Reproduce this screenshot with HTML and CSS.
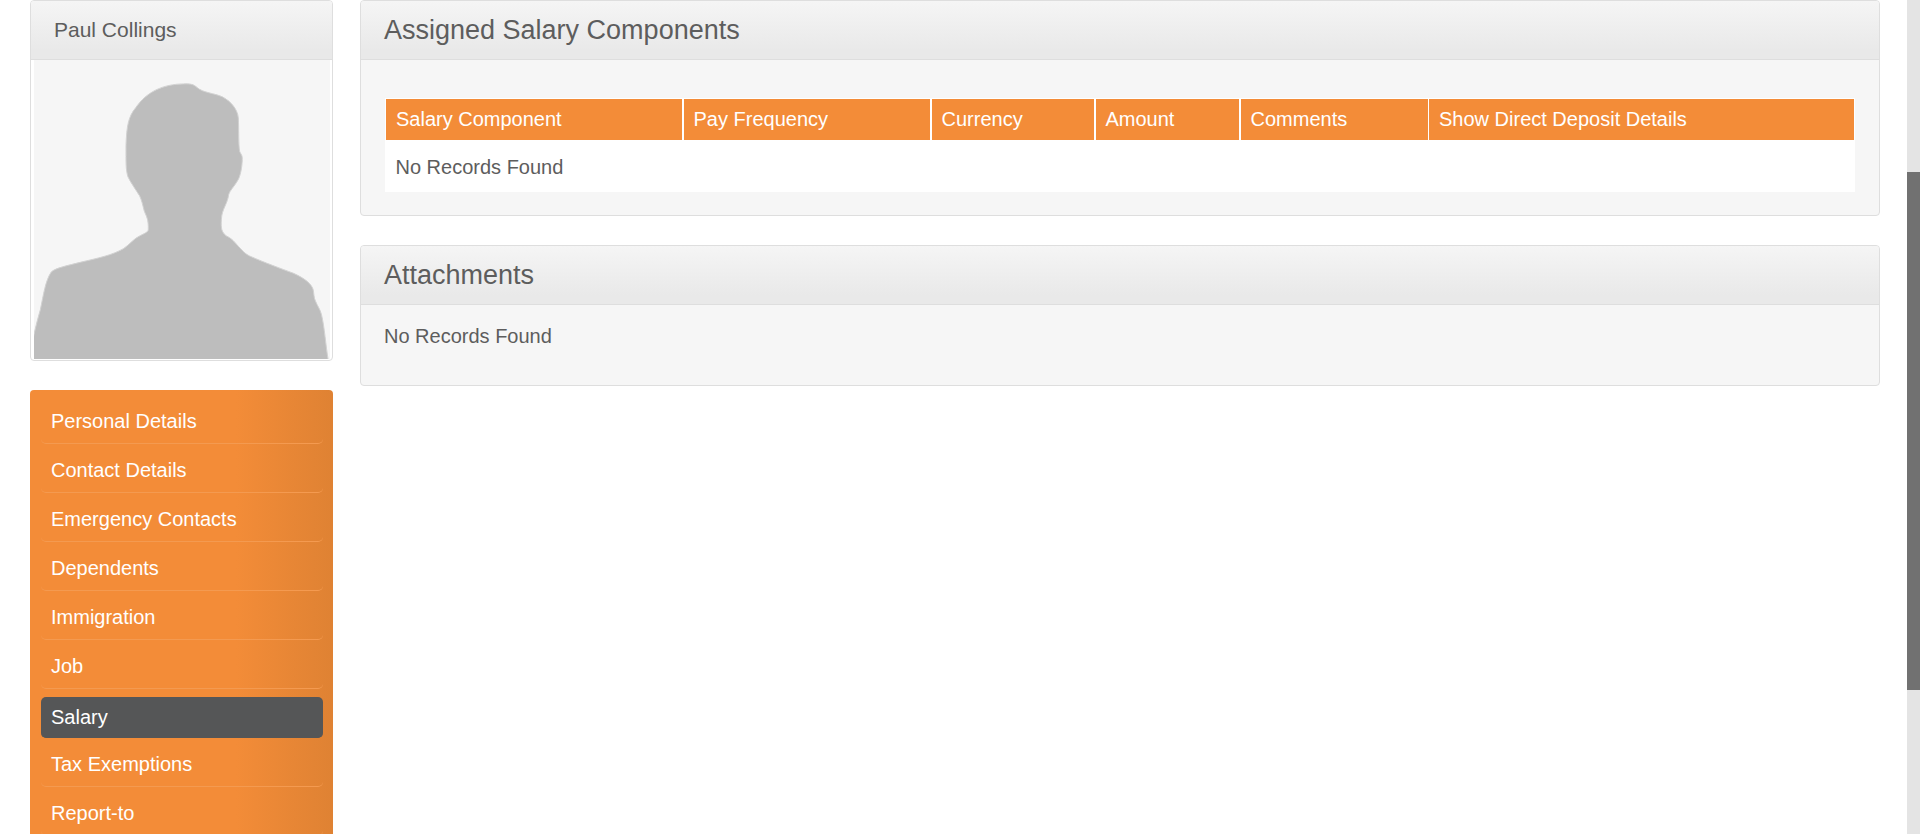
FILE: index.html
```
<!DOCTYPE html>
<html lang="en">
<head>
<meta charset="utf-8">
<title>Salary - Paul Collings</title>
<link rel="stylesheet" href="styles.css">
</head>
<body>
<div class="app">
  <div class="page">
    <aside class="sidebar">
      <section class="card profile">
        <h1 class="card-head profile-name">Paul Collings</h1>
        <div class="photo">
          <svg class="silhouette" viewBox="41 180 891 900" role="img" aria-label="Employee photo">
            <rect x="41" y="180" width="891" height="900" fill="#f6f6f6"/>
            <path fill="#bdbdbd" stroke="#d2d2d2" stroke-width="3" d="M35 1085V1035C45 985 52 960 60 932C70 885 75 845 93 818C105 806 145 798 180 789C235 776 275 768 310 748C330 735 340 718 362 708C378 700 385 697 385 690C386 660 380 652 373 635C368 615 365 602 359 589C350 575 330 545 324 532C317 510 318 490 318 435C320 380 325 350 347 324C380 275 430 253 490 252C515 251 522 254 532 263C550 279 585 280 608 291C635 305 654 330 656 354C658 390 656 430 660 455C665 467 668 465 668 480C667 505 662 530 654 543C643 562 631 572 627 585C624 612 606 630 605 660C603 690 607 698 619 709C637 718 642 725 650 734C672 758 675 762 690 770C735 790 785 808 822 822C858 838 876 855 881 870C884 882 883 895 888 905C894 920 902 930 906 945C916 985 919 1040 927 1085Z"/>
          </svg>
        </div>
      </section>
      <nav class="menu" aria-label="Employee sections">
        <ul class="menu-list">
          <li><a class="menu-link" href="#">Personal Details</a></li>
          <li><a class="menu-link" href="#">Contact Details</a></li>
          <li><a class="menu-link" href="#">Emergency Contacts</a></li>
          <li><a class="menu-link" href="#">Dependents</a></li>
          <li><a class="menu-link" href="#">Immigration</a></li>
          <li><a class="menu-link" href="#">Job</a></li>
          <li><a class="menu-link active" href="#" aria-current="page">Salary</a></li>
          <li><a class="menu-link" href="#">Tax Exemptions</a></li>
          <li><a class="menu-link" href="#">Report-to</a></li>
        </ul>
      </nav>
    </aside>
    <main class="content">
      <section class="card">
        <h2 class="card-head">Assigned Salary Components</h2>
        <div class="card-body components">
          <table class="grid">
            <colgroup>
              <col class="col-component"><col class="col-frequency"><col class="col-currency"><col class="col-amount"><col class="col-comments"><col>
            </colgroup>
            <thead>
              <tr><th>Salary Component</th><th>Pay Frequency</th><th>Currency</th><th>Amount</th><th>Comments</th><th>Show Direct Deposit Details</th></tr>
            </thead>
            <tbody>
              <tr><td colspan="6">No Records Found</td></tr>
            </tbody>
          </table>
        </div>
      </section>
      <section class="card">
        <h2 class="card-head">Attachments</h2>
        <div class="card-body attachments"><p class="note">No Records Found</p></div>
      </section>
    </main>
  </div>
  <div class="scrollbar"><div class="thumb"></div></div>
</div>
</body>
</html>
```
FILE: styles.css
```
* { box-sizing: border-box; }

body {
  margin: 0;
  background: #fff;
  color: #5d5d5d;
  font: 20px/24px "Liberation Sans", Arial, sans-serif;
}

.app {
  display: flex;
  height: 100vh;
  overflow: hidden;
}

.page {
  flex: 1;
  display: flex;
  gap: 27px;
  padding: 0 27px 0 30px;
}

.sidebar {
  flex: none;
  width: 303px;
  display: flex;
  flex-direction: column;
  gap: 29px;
}

.content {
  flex: 1;
  min-width: 0;
  display: flex;
  flex-direction: column;
  gap: 29px;
}

.card {
  flex: none;
  border: 1px solid #dedede;
  border-radius: 4px;
  background: #f6f6f6;
  overflow: hidden;
}

.card-head {
  margin: 0;
  padding: 12px 23px;
  border-bottom: 1px solid #dedede;
  background: linear-gradient(#f5f5f5, #e9e9e9 85%);
  font-size: 27px;
  line-height: 34px;
  font-weight: normal;
}

.profile { background: #fff; }

.profile-name { font-size: 21px; }

.photo { padding: 0 2px 1px 3px; }

.silhouette {
  display: block;
  width: 100%;
}

.menu {
  flex: 1 0 auto;
  padding: 13px 10px 13px 11px;
  border-radius: 4px 4px 0 0;
  background: linear-gradient(to right, #f38c38 68%, #df8233);
}

.menu-list {
  display: flex;
  flex-direction: column;
  gap: 8px;
  margin: 0;
  padding: 0;
  list-style: none;
}

.menu-link {
  display: block;
  padding: 6px 10px 10px;
  border-bottom: 1px solid #f49a50;
  border-radius: 5px;
  color: #fff;
  text-decoration: none;
}

.menu-link.active {
  padding: 8px 10px;
  border-bottom-color: #555657;
  background: #555657;
}

.components { padding: 38px 24px 23px; }

.grid {
  width: 100%;
  table-layout: fixed;
  border-collapse: collapse;
  background: #fff;
}

.grid th,
.grid td {
  padding: 8px 10px 9px;
  text-align: left;
  font-weight: normal;
}

.grid th {
  border: 1px solid #fff;
  border-width: 1px 2px 1px 1px;
  background: #f38c38;
  color: #fff;
}

.grid th:nth-child(n+5) { border-right-width: 1px; }

.grid td { padding: 14px 10px 13px; }

.col-component { width: 297px; }
.col-frequency { width: 248px; }
.col-currency { width: 164px; }
.col-amount { width: 145px; }
.col-comments { width: 189px; }

.attachments { padding: 19px 23px 37px; }

.note { margin: 0; }

.scrollbar {
  flex: none;
  width: 13px;
  padding-top: 172px;
  background: #e4e4e4;
}

.thumb {
  height: 518px;
  background: #717171;
}
```
